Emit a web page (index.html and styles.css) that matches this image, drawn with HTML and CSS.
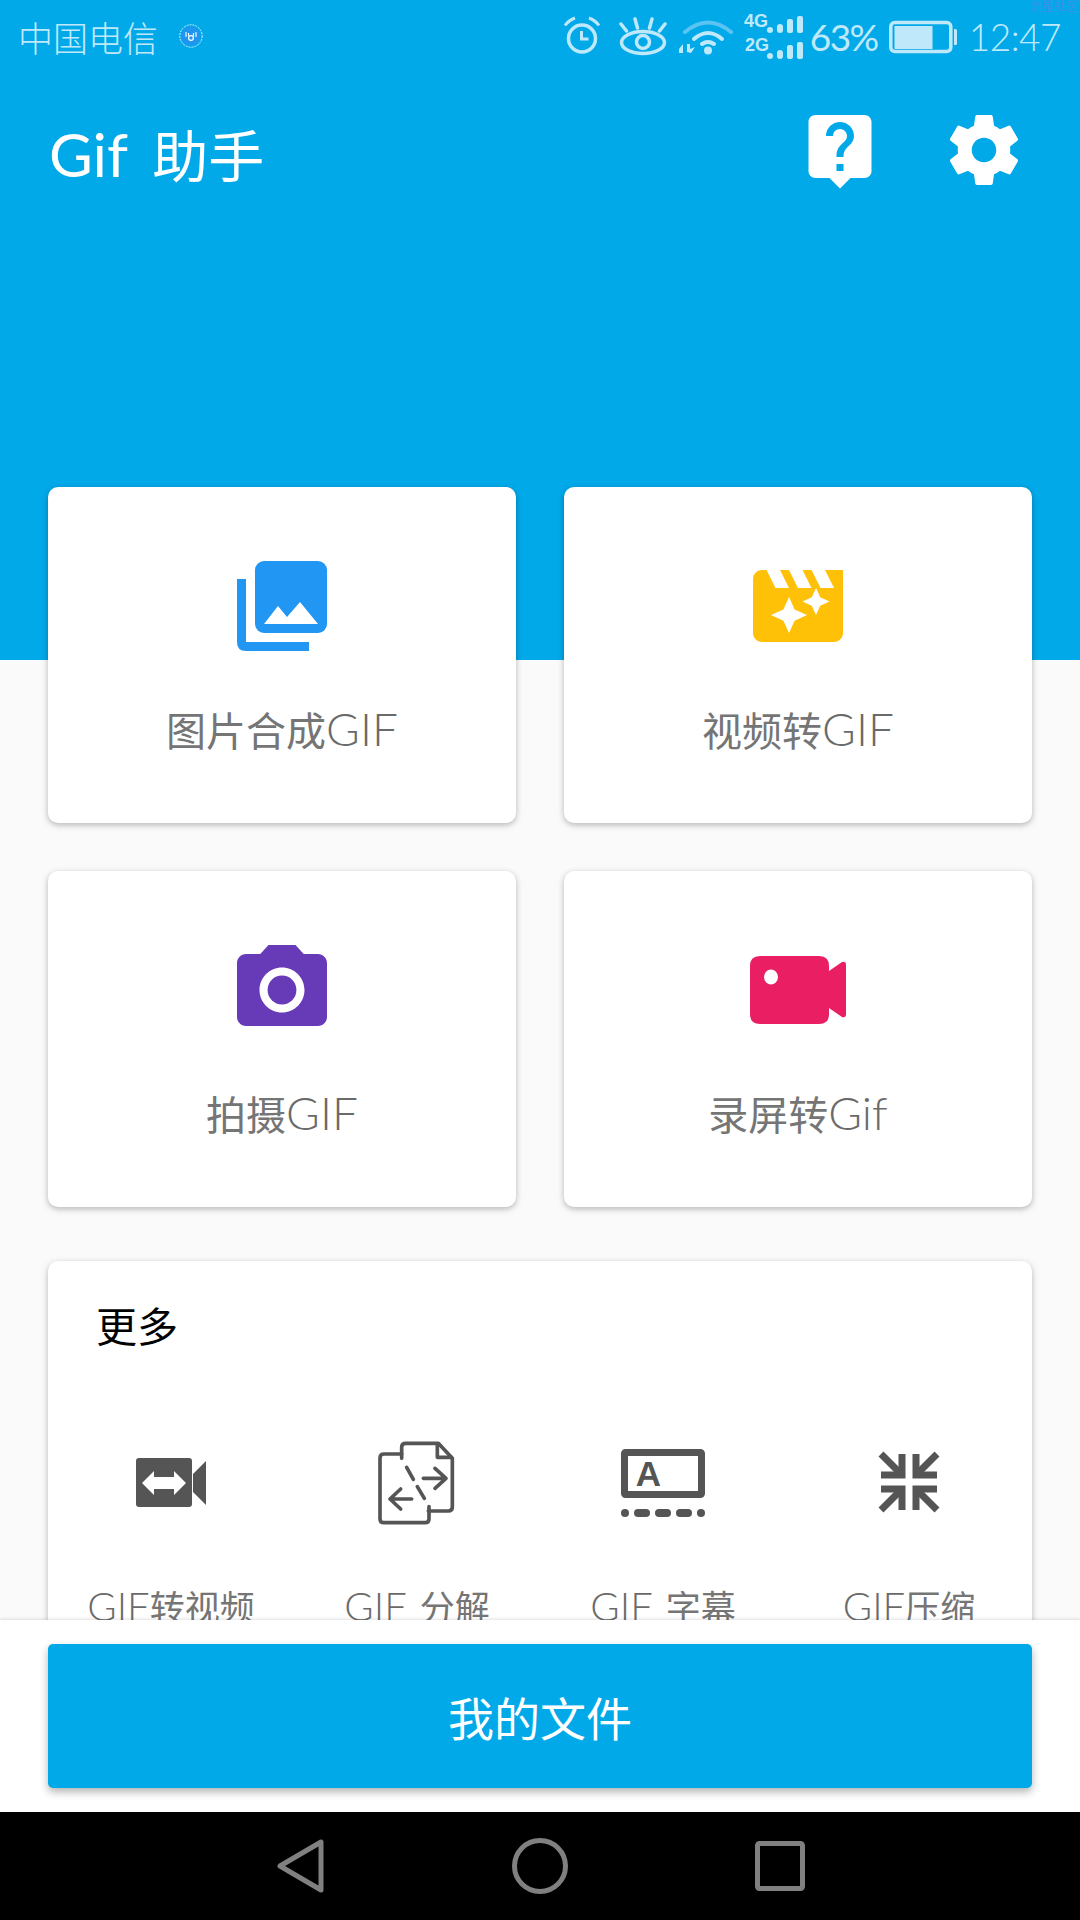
FILE: index.html
```html
<!DOCTYPE html>
<html lang="zh-CN">
<head>
    <meta charset="UTF-8">
    <meta name="viewport" content="width=device-width, initial-scale=1.0">
    <title>Gif 助手</title>

    <link rel="stylesheet" href="styles.css">
</head>
<body>
    <div class="app">
        <div class="main">
            <div class="status">
                <span class="carrier">中国电信</span>
                <svg class="badge" viewBox="0 0 24 24" width="24" height="24">
                    <circle cx="12" cy="12" r="11.2" fill="none" stroke="#cfeefc" stroke-width="1" stroke-dasharray="2 1"/>
                    <circle cx="12" cy="12" r="9.6" fill="#1e96f0"/>
                    <circle cx="12" cy="14" r="2.4" fill="none" stroke="#fff" stroke-width="1.2"/>
                    <path d="M7 8v5M9.500 9v3M14.500 9v3M17 8v5" fill="none" stroke="#fff" stroke-width="1.100"/>
                </svg>
                <span class="status-gap"></span>

                <svg class="si alarm" viewBox="562 14 38 44" width="38" height="44" fill="none" stroke="#bfe9fb" stroke-width="3.500">
                    <circle cx="581" cy="38.500" r="13.500"/>
                    <path d="M580.500 31v8h7" stroke-width="3"/>
                    <path d="M564 25.500q3.500-5 10-7.500M598 25.500q-3.500-5-10-7.500" stroke-width="3"/>
                </svg>
                <svg class="si eye" viewBox="618 14 49 44" width="49" height="44" fill="none" stroke="#bfe9fb" stroke-width="3.500">
                    <ellipse cx="642" cy="42.500" rx="21.500" ry="11"/>
                    <circle cx="642" cy="42" r="6.500"/>
                    <path d="M634 19l2.500 9M651 19l-2.500 9M620 24l5.500 7M664 24l-5.500 7" stroke-linecap="round"/>
                </svg>
                <svg class="si wifi" viewBox="678 14 55 44" width="55" height="44" fill="none" stroke="#bfe9fb" stroke-width="4" stroke-linecap="round">
                    <path d="M684 32q23-19 46 0" stroke="#5cc4f2"/>
                    <path d="M693 39q14-12 28 0"/>
                    <path d="M701 44q6-4 12 0"/>
                    <circle cx="707" cy="50.500" r="4" fill="#bfe9fb" stroke="none"/>
                    <path d="M678 49l4-5v9h-4zM690 53l-4-1v-8h3v5l5-2z" fill="#bfe9fb" stroke="none"/>
                </svg>
                <svg class="si signal" viewBox="743 6 62 60" width="62" height="60" fill="#bfe9fb">
                    <text x="743" y="27" class="net">4G</text>
                    <text x="744" y="51" class="net">2G</text>
                    <rect x="766" y="27" width="6" height="6" rx="3"/>
                    <rect x="776" y="24" width="6" height="9" rx="3"/>
                    <rect x="786" y="19" width="6" height="14" rx="2"/>
                    <rect x="796" y="16" width="6" height="17" rx="2"/>
                    <rect x="766" y="53" width="6" height="6" rx="3"/>
                    <rect x="776" y="50" width="6" height="9" rx="3"/>
                    <rect x="786" y="45" width="6" height="14" rx="2"/>
                    <rect x="796" y="42" width="6" height="17" rx="2"/>
                </svg>
                <span class="percent">63%</span>
                <svg class="si battery" viewBox="888 14 68 44" width="68" height="44">
                    <rect x="889.800" y="22.500" width="60" height="29" rx="4" fill="none" stroke="#bfe9fb" stroke-width="3.500"/>
                    <rect x="893.500" y="26" width="38" height="23" fill="#bfe9fb"/>
                    <path d="M953 29h1.500q1.500 0 1.500 1.500v13q0 1.500-1.500 1.500H953z" fill="#bfe9fb"/>
                </svg>
                <span class="clock">12:47</span>
                <span class="watermark">流星社区</span>
            </div>

            <div class="toolbar">
                <h1 class="title"><span class="lat">Gif</span> 助手</h1>
                <div class="toolbar-icons">
                    <svg viewBox="0 0 24 24" width="84" height="84" fill="#fff"><path d="M19 2H5c-1.110 0-2 .9-2 2v14c0 1.100.89 2 2 2h4l3 3 3-3h4c1.100 0 2-.9 2-2V4c0-1.100-.9-2-2-2zm-6 16h-2v-2h2v2zm2.070-7.750l-.9.92C13.450 11.900 13 12.500 13 14h-2v-.5c0-1.100.45-2.100 1.170-2.830l1.240-1.260c.37-.36.59-.86.59-1.410 0-1.100-.9-2-2-2s-2 .9-2 2H8c0-2.210 1.790-4 4-4s4 1.790 4 4c0 .88-.36 1.680-.93 2.250z"/></svg>
                    <svg viewBox="0 0 24 24" width="84" height="84" fill="#fff"><path d="M19.430 12.980c.04-.32.07-.64.07-.98s-.03-.66-.07-.98l2.110-1.650c.19-.15.24-.42.12-.64l-2-3.460c-.12-.22-.39-.3-.61-.22l-2.490 1c-.52-.4-1.080-.73-1.690-.98l-.38-2.650C14.460 2.180 14.250 2 14 2h-4c-.25 0-.46.18-.49.42l-.38 2.650c-.61.25-1.170.59-1.690.98l-2.490-1c-.23-.09-.49 0-.61.22l-2 3.460c-.13.22-.07.49.12.64l2.110 1.650c-.04.32-.07.65-.07.98s.03.66.07.98l-2.110 1.650c-.19.15-.24.42-.12.64l2 3.460c.12.22.39.3.61.22l2.490-1c.52.4 1.080.73 1.690.98l.38 2.650c.03.24.24.42.49.42h4c.25 0 .46-.18.49-.42l.38-2.650c.61-.25 1.170-.59 1.690-.98l2.490 1c.23.09.49 0 .61-.22l2-3.460c.12-.22.07-.49-.12-.64l-2.110-1.650zM12 15.500c-1.930 0-3.500-1.570-3.500-3.500s1.570-3.500 3.500-3.500 3.500 1.570 3.500 3.500-1.570 3.500-3.500 3.500z"/></svg>
                </div>
            </div>

            <div class="tiles">
                <div class="tile">
                    <svg viewBox="0 0 108 108" width="108" height="108">
                        <rect x="27" y="9" width="72" height="72" rx="9" fill="#2196f3"/>
                        <path d="M9 27h9v63h63v9H18q-9 0-9-9z" fill="#2196f3"/>
                        <path d="M36 72l14-18 9 11 13-15 18 22z" fill="#fff"/>
                    </svg>
                    <span class="tile-label">图片合成<span class="lat">GIF</span></span>
                </div>
                <div class="tile">
                    <svg viewBox="0 0 24 24" width="108" height="108"><path fill="#ffc107" d="M18 4l2 4h-3l-2-4h-2l2 4h-3l-2-4H8l2 4H7L5 4H4c-1.100 0-1.990.9-1.990 2L2 18c0 1.100.9 2 2 2h16c1.100 0 2-.9 2-2V4h-4zm-6.750 11.250L10 18l-1.250-2.750L6 14l2.750-1.250L10 10l1.250 2.750L14 14l-2.750 1.250zm5.690-3.310L16 14l-.94-2.060L13 11l2.060-.94L16 8l.94 2.060L19 11l-2.060.94z"/></svg>
                    <span class="tile-label">视频转<span class="lat">GIF</span></span>
                </div>
                <div class="tile">
                    <svg viewBox="0 0 24 24" width="108" height="108"><path fill="#673ab7" d="M9 2L7.170 4H4c-1.100 0-2 .9-2 2v12c0 1.100.9 2 2 2h16c1.100 0 2-.9 2-2V6c0-1.100-.9-2-2-2h-3.170L15 2H9zm3 15c-2.760 0-5-2.240-5-5s2.240-5 5-5 5 2.240 5 5-2.240 5-5 5z"/><circle cx="12" cy="12" r="3.200" fill="#673ab7"/></svg>
                    <span class="tile-label">拍摄<span class="lat">GIF</span></span>
                </div>
                <div class="tile">
                    <svg viewBox="0 0 108 108" width="108" height="108">
                        <path fill="#e91e63" d="M16 20h59q10 0 10 10v5l13-9q4-1 4 3v49q0 4-4 3L85 72v6q0 10-10 10H16q-10 0-10-10V30q0-10 10-10z"/>
                        <ellipse cx="27" cy="41" rx="7" ry="7.500" fill="#fff"/>
                    </svg>
                    <span class="tile-label">录屏转<span class="lat">Gif</span></span>
                </div>
            </div>

            <div class="more">
                <div class="more-title">更多</div>
                <div class="tools">
                    <div class="tool">
                        <svg viewBox="0 0 96 96" width="96" height="96">
                            <rect x="13" y="24" width="56" height="49" rx="3" fill="#555"/>
                            <path d="M70 40l13-13v44L70 58z" fill="#555"/>
                            <path d="M19 49l12-12v6h20v-6l12 12-12 12v-6H31v6z" fill="#fff"/>
                        </svg>
                        <span class="tool-label"><span class="lat">GIF</span>转视频</span>
                    </div>
                    <div class="tool">
                        <svg viewBox="987 552 288 288" width="96" height="96" fill="none" stroke="#555" stroke-width="11" stroke-linecap="round" stroke-linejoin="round">
                            <path d="M1085 625v-33q0-12 12-12h98l42 45v146q0 12-12 12h-60"/>
                            <path d="M1192 582v40h42"/>
                            <path d="M1085 612h-53q-12 0-12 12v182q0 12 12 12h123q12 0 12-12v-36"/>
                            <path d="M1100 652l20 36M1132 710l21 35"/>
                            <path d="M1150 685h65M1185 655l33 30-33 30"/>
                            <path d="M1115 747h-65M1082 717l-32 30 32 30"/>
                        </svg>
                        <span class="tool-label"><span class="lat">GIF</span> 分解</span>
                    </div>
                    <div class="tool">
                        <svg viewBox="0 0 96 96" width="96" height="96" fill="#555">
                            <rect x="9.500" y="18.500" width="77" height="42" rx="1" fill="none" stroke="#555" stroke-width="7"/>
                            <text x="33.500" y="52" class="caption-a" text-anchor="middle">A</text>
                            <circle cx="10" cy="79" r="4"/>
                            <rect x="19" y="75" width="16" height="8" rx="4"/>
                            <rect x="40" y="75" width="16" height="8" rx="4"/>
                            <rect x="61" y="75" width="16" height="8" rx="4"/>
                            <circle cx="86" cy="79" r="4"/>
                        </svg>
                        <span class="tool-label"><span class="lat">GIF</span> 字幕</span>
                    </div>
                    <div class="tool">
                        <svg viewBox="-48 -48 96 96" width="96" height="96" fill="none" stroke="#555" stroke-width="7">
                            <path d="M-28-7H-7V-28M28-7H7V-28M-28 7H-7V28M28 7H7V28"/>
                            <path d="M-28-28L-8-8M28-28L8-8M-28 28L-8 8M28 28L8 8"/>
                        </svg>
                        <span class="tool-label"><span class="lat">GIF</span>压缩</span>
                    </div>
                </div>
            </div>
        </div>

        <div class="bottom">
            <button class="files-btn">我的文件</button>
        </div>

        <div class="nav">
            <svg viewBox="0 0 60 60" width="60" height="60"><path d="M51 6v48L10 30z" fill="none" stroke="#808080" stroke-width="5" stroke-linejoin="round"/></svg>
            <svg viewBox="0 0 60 60" width="60" height="60"><circle cx="30" cy="30" r="25.500" fill="none" stroke="#808080" stroke-width="5"/></svg>
            <svg viewBox="0 0 60 60" width="60" height="60"><rect x="7.500" y="7.500" width="45" height="45" rx="2" fill="none" stroke="#808080" stroke-width="5"/></svg>
        </div>
    </div>
</body>
</html>
```

FILE: styles.css
```css
* {
    box-sizing: border-box;
}
body {
    margin: 0;
    font-family: Lato, "Noto Sans CJK SC", sans-serif;
}
.app {
    width: 1080px;
    height: 1920px;
    display: flex;
    flex-direction: column;
    overflow: hidden;
}
.main {
    flex: 1;
    min-height: 0;
    overflow: hidden;
    background: linear-gradient(#02a9e9 660px, #fafafa 660px);
}

/* status bar */
.status {
    position: relative;
    height: 72px;
    display: flex;
    align-items: center;
    padding: 0 19px 0 18px;
    color: #bfe9fb;
}
.carrier {
    font-size: 35px;
    font-weight: 300;
}
.badge {
    margin-left: 21px;
}
.status-gap {
    flex: 1;
}
.si {
    display: block;
    flex: none;
}
.eye {
    margin-left: 18px;
}
.wifi {
    margin-left: 11px;
}
.signal {
    margin-left: 10px;
}
.net {
    font-family: "Liberation Sans", sans-serif;
    font-size: 18px;
    font-weight: 700;
}
.percent {
    margin-left: 4px;
    font-size: 37px;
    letter-spacing: -1.5px;
}
.battery {
    margin-left: 11px;
}
.clock {
    margin-left: 12px;
    font-size: 37px;
    font-weight: 300;
    letter-spacing: -.5px;
}
.watermark {
    position: absolute;
    top: 0;
    right: 2px;
    font-size: 12px;
    line-height: 14px;
    color: #3f90ea;
}

/* toolbar */
.toolbar {
    height: 156px;
    display: flex;
    align-items: center;
    justify-content: space-between;
    padding: 0 54px 0 49px;
}
.title {
    margin: 10px 0 0;
    font-size: 56px;
    font-weight: 400;
    line-height: 80px;
    word-spacing: 10px;
    color: #fff;
}
.title .lat {
    font-size: 60px;
}
.toolbar-icons {
    display: flex;
    gap: 60px;
}

/* big tiles */
.tiles {
    display: grid;
    grid-template-columns: 468px 468px;
    gap: 48px;
    margin: 259px 48px 0;
}
.tile {
    height: 336px;
    padding-top: 65px;
    display: flex;
    flex-direction: column;
    align-items: center;
    background: #fff;
    border-radius: 10px;
    box-shadow: 0 2px 6px rgba(0, 0, 0, .28);
}
.tile-label {
    margin-top: 39px;
    font-size: 40px;
    line-height: 60px;
    color: #757575;
}
.tile-label .lat {
    font-size: 46px;
    font-weight: 300;
    color: #6a6a6a;
}

/* more */
.more {
    margin: 54px 48px 0;
    padding-top: 36px;
    background: #fff;
    border-radius: 10px;
    box-shadow: 0 2px 6px rgba(0, 0, 0, .28);
}
.more-title {
    padding-left: 48px;
    font-size: 41px;
    line-height: 60px;
    color: #000;
}
.tools {
    display: grid;
    grid-template-columns: repeat(4, 1fr);
    margin-top: 77px;
    padding-bottom: 40px;
}
.tool {
    display: flex;
    flex-direction: column;
    align-items: center;
}
.tool-label {
    margin-top: 51px;
    font-size: 35px;
    line-height: 50px;
    word-spacing: 4px;
    color: #757575;
}
.tool-label .lat {
    font-size: 40px;
    font-weight: 300;
    color: #6a6a6a;
}
.caption-a {
    font-family: "Liberation Sans", sans-serif;
    font-size: 35px;
    font-weight: 700;
}

/* bottom */
.bottom {
    position: relative;
    height: 192px;
    padding: 24px 48px;
    background: #fff;
    box-shadow: 0 -1px 3px rgba(0, 0, 0, .12);
}
.files-btn {
    display: block;
    width: 100%;
    height: 144px;
    border: 0;
    border-radius: 5px;
    background: #02a9e9;
    color: #fff;
    font-family: inherit;
    font-size: 46px;
    box-shadow: 0 4px 8px rgba(0, 0, 0, .3);
}
.nav {
    height: 108px;
    display: flex;
    align-items: center;
    justify-content: center;
    gap: 180px;
    background: #000;
}
```
